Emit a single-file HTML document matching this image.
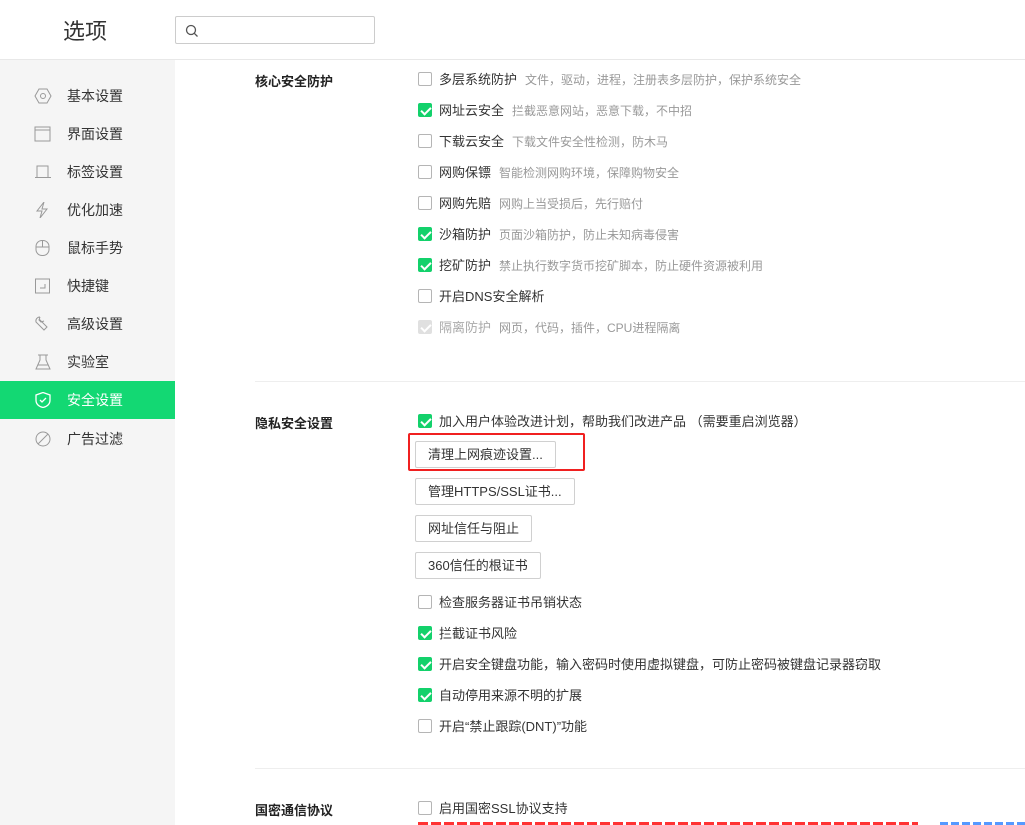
<!DOCTYPE html><html><head><meta charset="utf-8"><style>
*{margin:0;padding:0;box-sizing:border-box}
body{width:1025px;height:825px;overflow:hidden;background:#fff;font-family:"Liberation Sans","Noto Sans CJK SC",sans-serif;color:#333;position:relative}
.a{position:absolute}
.hdr{left:0;top:0;width:1025px;height:60px;border-bottom:1px solid #e8e8e8}
.side{left:0;top:60px;width:175px;height:765px;background:#f5f5f5}
.nav{position:absolute;left:0;width:175px;height:38px;font-size:14px;line-height:38px;padding-left:67px;color:#333}
.nav svg{position:absolute;left:34px;top:11px}
.nav.on{background:#13d873;color:#fff}
.t{font-size:13px;font-weight:bold;color:#222;left:255px}
.cb{position:absolute;left:418px;width:14px;height:14px;border:1px solid #b5b5b5;border-radius:2px;background:#fff}
.cb.c{background:#13d16b;border-color:#13d16b}
.cb.d{background:#e0e0e0;border-color:#e0e0e0}
.cb.c::after,.cb.d::after{content:"";position:absolute;left:4px;top:1px;width:4px;height:8px;border:solid #fff;border-width:0 2px 2px 0;transform:rotate(45deg)}
.row{position:absolute;left:439px;font-size:13px;color:#333;white-space:nowrap;line-height:16px}
.row span{color:#999;font-size:12px;margin-left:8px}
.btn{position:absolute;left:415px;height:27px;border:1px solid #d0d0d0;border-radius:2px;background:#fff;font-size:13px;line-height:25px;padding:0 12px;color:#333}
.hr{left:255px;right:0;height:1px;background:#eee}
</style></head><body>
<div class="a hdr"></div>
<div class="a" style="left:63px;top:14px;font-size:22px;color:#333">选项</div>
<div class="a" style="left:175px;top:16px;width:200px;height:28px;border:1px solid #ccc;border-radius:2px"><svg class="a" style="left:9px;top:7px" width="14" height="14" viewBox="0 0 14 14"><circle cx="6" cy="6" r="4.5" fill="none" stroke="#555" stroke-width="1.3"/><line x1="9.3" y1="9.3" x2="12.5" y2="12.5" stroke="#555" stroke-width="1.3"/></svg></div>
<div class="a side"></div>
<div class="nav" style="top:77px"><svg width="18" height="16" viewBox="0 0 18 16"><polygon points="5,1 13,1 17,8 13,15 5,15 1,8" fill="none" stroke="#999"/><circle cx="9" cy="8" r="2.5" fill="none" stroke="#999"/></svg>基本设置</div>
<div class="nav" style="top:115px"><svg width="18" height="16" viewBox="0 0 18 16"><rect x="1" y="1" width="15" height="14" fill="none" stroke="#999"/><line x1="1" y1="4" x2="16" y2="4" stroke="#999"/></svg>界面设置</div>
<div class="nav" style="top:153px"><svg width="18" height="16" viewBox="0 0 18 16"><path d="M3 13V2h11v11M1 13.5h16" fill="none" stroke="#999"/></svg>标签设置</div>
<div class="nav" style="top:191px"><svg width="18" height="16" viewBox="0 0 18 16"><path d="M10 0L3 9h5l-2 7 7-9H8z" fill="none" stroke="#999"/></svg>优化加速</div>
<div class="nav" style="top:229px"><svg width="18" height="16" viewBox="0 0 18 16"><rect x="2" y="0.5" width="13" height="15" rx="6" fill="none" stroke="#999"/><path d="M2 7h13M8.5 0.5v6.5" stroke="#999"/></svg>鼠标手势</div>
<div class="nav" style="top:267px"><svg width="18" height="16" viewBox="0 0 18 16"><rect x="1.5" y="1" width="14" height="14" fill="none" stroke="#999"/><path d="M11 6v4H6" fill="none" stroke="#999"/></svg>快捷键</div>
<div class="nav" style="top:305px"><svg width="18" height="16" viewBox="0 0 18 16"><path d="M6 1a4 4 0 0 0-4 5l8 8 3-3-8-8M6 1l-1 3 2 2 3-1" fill="none" stroke="#999"/></svg>高级设置</div>
<div class="nav" style="top:343px"><svg width="18" height="16" viewBox="0 0 18 16"><path d="M4 1h10M6 1v5l-4 9h14l-4-9V1M4 11h10" fill="none" stroke="#999"/></svg>实验室</div>
<div class="nav on" style="top:381px"><svg width="18" height="16" viewBox="0 0 18 16"><path d="M9 0.5L2 3v5c0 4 3 6.5 7 7.5 4-1 7-3.5 7-7.5V3z" fill="none" stroke="#fff" stroke-width="1.3"/><path d="M6 8l2 2 4-4" fill="none" stroke="#fff" stroke-width="1.3"/></svg>安全设置</div>
<div class="nav" style="top:420px"><svg width="18" height="16" viewBox="0 0 18 16"><circle cx="9" cy="8" r="7" fill="none" stroke="#999"/><line x1="4" y1="13" x2="14" y2="3" stroke="#999"/></svg>广告过滤</div>

<div class="a t" style="top:71px">核心安全防护</div>
<div class="cb" style="top:72px"></div><div class="row" style="top:72px">多层系统防护<span>文件，驱动，进程，注册表多层防护，保护系统安全</span></div>
<div class="cb c" style="top:103px"></div><div class="row" style="top:103px">网址云安全<span>拦截恶意网站，恶意下载，不中招</span></div>
<div class="cb" style="top:134px"></div><div class="row" style="top:134px">下载云安全<span>下载文件安全性检测，防木马</span></div>
<div class="cb" style="top:165px"></div><div class="row" style="top:165px">网购保镖<span>智能检测网购环境，保障购物安全</span></div>
<div class="cb" style="top:196px"></div><div class="row" style="top:196px">网购先赔<span>网购上当受损后，先行赔付</span></div>
<div class="cb c" style="top:227px"></div><div class="row" style="top:227px">沙箱防护<span>页面沙箱防护，防止未知病毒侵害</span></div>
<div class="cb c" style="top:258px"></div><div class="row" style="top:258px">挖矿防护<span>禁止执行数字货币挖矿脚本，防止硬件资源被利用</span></div>
<div class="cb" style="top:289px"></div><div class="row" style="top:289px">开启DNS安全解析</div>
<div class="cb d" style="top:320px"></div><div class="row" style="top:320px;color:#aaa">隔离防护<span>网页，代码，插件，CPU进程隔离</span></div>
<div class="a hr" style="top:381px"></div>

<div class="a t" style="top:413px">隐私安全设置</div>
<div class="cb c" style="top:414px"></div><div class="row" style="top:414px">加入用户体验改进计划，帮助我们改进产品 （需要重启浏览器）</div>
<div class="btn" style="top:441px;width:141px">清理上网痕迹设置...</div>
<div class="a" style="left:408px;top:433px;width:177px;height:38px;border:2px solid #f02020;border-radius:2px"></div>
<div class="btn" style="top:478px;width:160px">管理HTTPS/SSL证书...</div>
<div class="btn" style="top:515px;width:117px">网址信任与阻止</div>
<div class="btn" style="top:552px;width:126px">360信任的根证书</div>
<div class="cb" style="top:595px"></div><div class="row" style="top:595px">检查服务器证书吊销状态</div>
<div class="cb c" style="top:626px"></div><div class="row" style="top:626px">拦截证书风险</div>
<div class="cb c" style="top:657px"></div><div class="row" style="top:657px">开启安全键盘功能，输入密码时使用虚拟键盘，可防止密码被键盘记录器窃取</div>
<div class="cb c" style="top:688px"></div><div class="row" style="top:688px">自动停用来源不明的扩展</div>
<div class="cb" style="top:719px"></div><div class="row" style="top:719px">开启“禁止跟踪(DNT)”功能</div>
<div class="a hr" style="top:768px"></div>

<div class="a t" style="top:800px">国密通信协议</div>
<div class="cb" style="top:801px"></div><div class="row" style="top:801px">启用国密SSL协议支持</div>
<div class="a" style="left:418px;top:822px;width:500px;height:3px;background:repeating-linear-gradient(90deg,#f33 0 10px,#fff 10px 13px)"></div>
<div class="a" style="left:940px;top:822px;width:85px;height:3px;background:repeating-linear-gradient(90deg,#59f 0 8px,#fff 8px 11px)"></div>
</body></html>
